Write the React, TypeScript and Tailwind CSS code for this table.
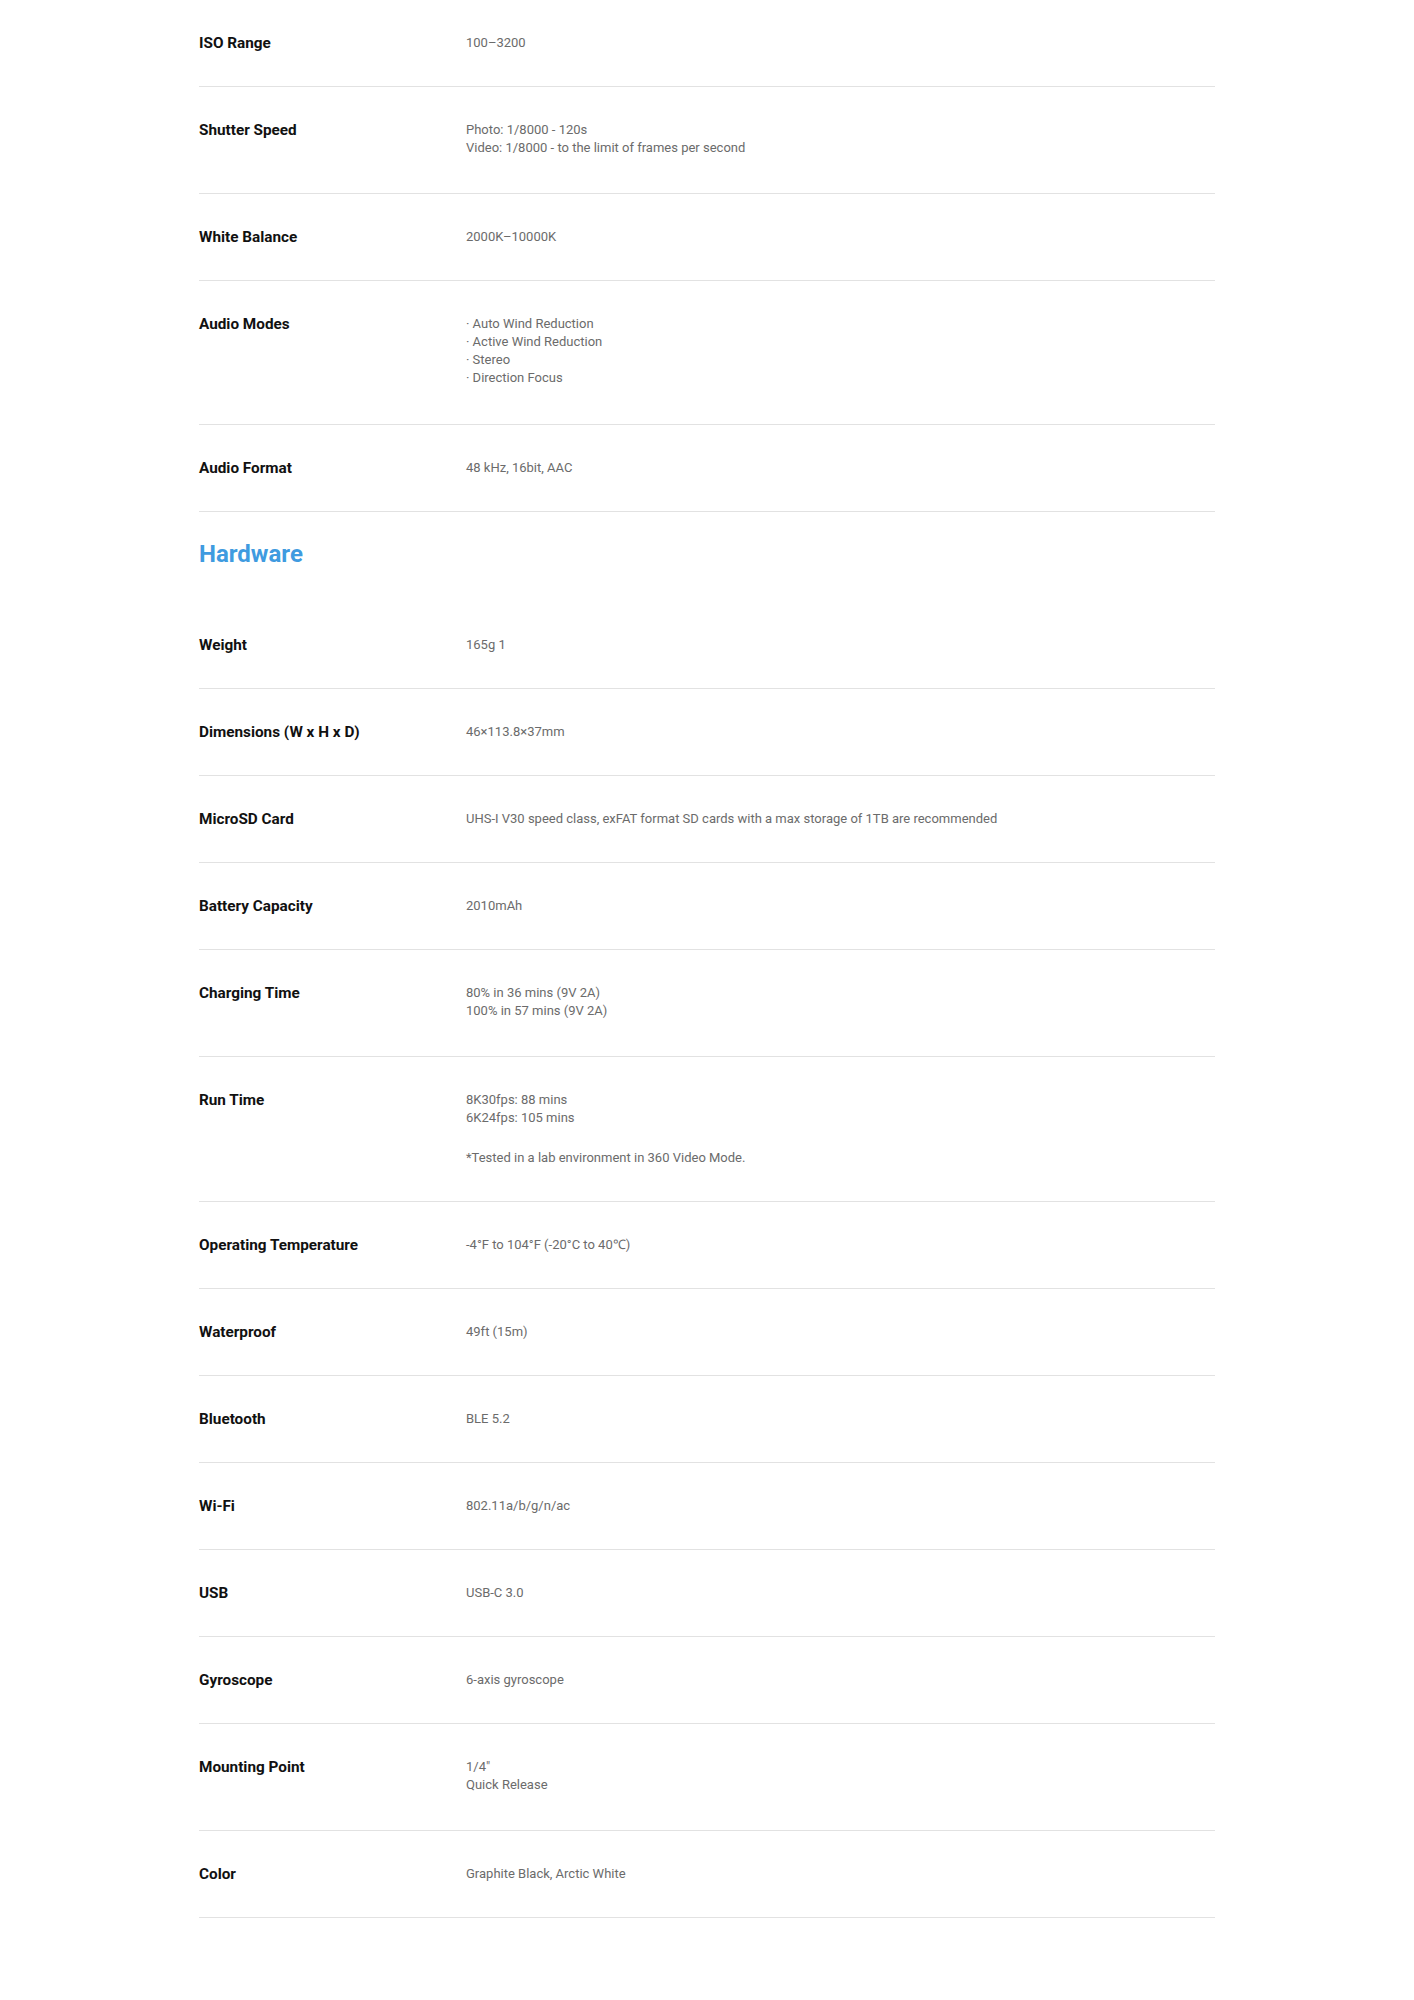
const before = [
  { label: 'ISO Range', lines: ['100–3200'], pad: 'pb-[32px]' },
  { label: 'Shutter Speed', lines: ['Photo: 1/8000 - 120s', 'Video: 1/8000 - to the limit of frames per second'], pad: 'pb-[36px]' },
  { label: 'White Balance', lines: ['2000K–10000K'], pad: 'pb-[32px]' },
  { label: 'Audio Modes', lines: ['· Auto Wind Reduction', '· Active Wind Reduction', '· Stereo', '· Direction Focus'], pad: 'pb-[37px]' },
  { label: 'Audio Format', lines: ['48 kHz, 16bit, AAC'], pad: 'pb-[32px]' },
]

const hardware = [
  { label: 'Weight', lines: ['165g 1'], pad: 'pb-[32px]' },
  { label: 'Dimensions (W x H x D)', lines: ['46×113.8×37mm'], pad: 'pb-[32px]' },
  { label: 'MicroSD Card', lines: ['UHS-I V30 speed class, exFAT format SD cards with a max storage of 1TB are recommended'], pad: 'pb-[32px]' },
  { label: 'Battery Capacity', lines: ['2010mAh'], pad: 'pb-[32px]' },
  { label: 'Charging Time', lines: ['80% in 36 mins (9V 2A)', '100% in 57 mins (9V 2A)'], pad: 'pb-[36px]' },
  { label: 'Run Time', lines: ['8K30fps: 88 mins', '6K24fps: 105 mins'], note: '*Tested in a lab environment in 360 Video Mode.', pad: 'pb-[34px]' },
  { label: 'Operating Temperature', lines: ['-4°F to 104°F (-20°C to 40℃)'], pad: 'pb-[32px]' },
  { label: 'Waterproof', lines: ['49ft (15m)'], pad: 'pb-[32px]' },
  { label: 'Bluetooth', lines: ['BLE 5.2'], pad: 'pb-[32px]' },
  { label: 'Wi-Fi', lines: ['802.11a/b/g/n/ac'], pad: 'pb-[32px]' },
  { label: 'USB', lines: ['USB-C 3.0'], pad: 'pb-[32px]' },
  { label: 'Gyroscope', lines: ['6-axis gyroscope'], pad: 'pb-[32px]' },
  { label: 'Mounting Point', lines: ['1/4"', 'Quick Release'], pad: 'pb-[36px]' },
  { label: 'Color', lines: ['Graphite Black, Arctic White'], pad: 'pb-[32px]' },
]

type Spec = { label: string; lines: string[]; note?: string; pad: string }

function SpecRow({ label, lines, note, pad }: Spec) {
  return (
    <div className={`flex border-b border-[#e2e2e2] pt-[32px] ${pad}`}>
      <div className="w-[267px] shrink-0 text-[15.3px] leading-[22px] font-bold text-[#111]">{label}</div>
      <div className="text-[13px] leading-[18px] text-[#6b6b6b] pt-[2px]">
        {lines.map((line) => (
          <p key={line}>{line}</p>
        ))}
        {note && <p className="mt-[22px]">{note}</p>}
      </div>
    </div>
  )
}

export default function App() {
  return (
    <div className="min-h-[2000px] bg-white font-['Roboto',sans-serif]">
      <div className="w-[1016px] mx-auto pb-[86px]">
        {before.map((spec) => (
          <SpecRow key={spec.label} {...spec} />
        ))}
        <h2 className="pt-[27px] pb-[33px] text-[24px] leading-[30px] font-bold text-[#3f9be0]">Hardware</h2>
        {hardware.map((spec) => (
          <SpecRow key={spec.label} {...spec} />
        ))}
      </div>
    </div>
  )
}
